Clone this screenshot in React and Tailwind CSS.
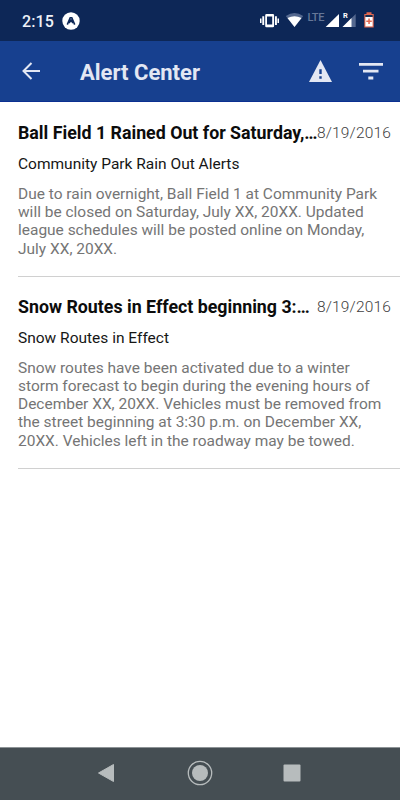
const alerts = [
  {
    title: 'Ball Field 1 Rained Out for Saturday,…',
    category: 'Community Park Rain Out Alerts',
    body: 'Due to rain overnight, Ball Field 1 at Community Park\nwill be closed on Saturday, July XX, 20XX. Updated\nleague schedules will be posted online on Monday,\nJuly XX, 20XX.',
  },
  {
    title: 'Snow Routes in Effect beginning 3:…',
    category: 'Snow Routes in Effect',
    body: 'Snow routes have been activated due to a winter\nstorm forecast to begin during the evening hours of\nDecember XX, 20XX. Vehicles must be removed from\nthe street beginning at 3:30 p.m. on December XX,\n20XX. Vehicles left in the roadway may be towed.',
  },
];

function StatusBar() {
  return (
    <div className="flex h-[41px] shrink-0 items-center bg-[#0d2757] pl-[22px]">
      <span className="w-[40px] pt-[2px] text-[16px] leading-5 font-medium tracking-[0.1px] text-[#eef1f8]">2:15</span>
      <svg width="18" height="18" viewBox="0 0 18 18">
        <circle cx="9" cy="9" r="8.7" fill="#fff" />
        <path d="M5.3 12.6 8.2 5.8h1.6l2.9 6.8M7 11 9 8.2 11 11" fill="none" stroke="#0d2757" strokeWidth="1.6" />
      </svg>
      <svg width="150" height="41" viewBox="0 0 150 41" className="ml-auto">
        <g fill="#fff">
          <path d="M10 18.5h1.5v4.5H10zM12.3 16.3h1.9v8.8h-1.9zM25 16.3h1.9v8.8H25zM27.5 18.5H29v4.5h-1.5z" />
          <path fillRule="evenodd" d="M16.5 14h6.3a1.3 1.3 0 0 1 1.3 1.3v10.6a1.3 1.3 0 0 1-1.3 1.3h-6.3a1.3 1.3 0 0 1-1.3-1.3V15.3a1.3 1.3 0 0 1 1.3-1.3zM17 16.5v8h5.2v-8z" />
        </g>
        <path d="M44.5 27 35.8 16Q44.5 10 53.2 16z" fill="#54688f" />
        <path d="M44.5 27 37.5 18Q44.5 14.3 51.5 18z" fill="#fff" />
        <text x="57.5" y="21" fontSize="11" fontWeight="500" fill="#667798" fontFamily="Roboto, sans-serif" textLength="17">LTE</text>
        <path d="M75.7 27 89 14v13z" fill="#fff" />
        <path d="M92.5 27 105.7 14v13z" fill="#54688f" />
        <path d="M92.5 27 101.5 18v9z" fill="#fff" />
        <text x="93" y="18.4" fontSize="7.5" fontWeight="700" fill="#fff" fontFamily="Roboto, sans-serif">R</text>
        <path d="M116.5 12.2h5v1.8h2.2v13.5h-9.4V14h2.2z" fill="#e2674f" />
        <path d="M115.4 15h7.2v2h-7.2z" fill="#163055" />
        <path d="M115.4 17h7.2v9.4h-7.2z" fill="#fff" />
        <path d="M118.3 18.5h1.5v2h2v1.5h-2v2h-1.5v-2h-2v-1.5h2z" fill="#e2674f" />
      </svg>
    </div>
  );
}

function AppBar() {
  return (
    <header className="flex h-[61px] shrink-0 items-center border-b border-[#0b2f91] bg-[#17408f] text-[#e3e7f3]">
      <svg width="18" height="18" viewBox="0 0 18 18" className="ml-[22px]">
        <path d="M18 9H1.5M9.5 1 1.5 9l8 8" fill="none" stroke="currentColor" strokeWidth="2" />
      </svg>
      <h1 className="ml-[40px] pt-[3px] text-[22px] leading-7 font-bold">Alert Center</h1>
      <svg width="24" height="22" viewBox="0 0 24 22" className="ml-auto">
        <path d="M12.5 0 24 22H1z" fill="currentColor" />
        <path d="M11.3 9.2h2.4v4.8h-2.4zM11.3 16.3h2.4v2.4h-2.4z" fill="#17408f" />
      </svg>
      <svg width="24" height="17" viewBox="0 0 24 17" className="mr-[17px] ml-[27px]">
        <path d="M0 0h24v2.8H0zM4 6.8h15.5v2.8H4zM9.3 13.6h5v2.8h-5z" fill="currentColor" />
      </svg>
    </header>
  );
}

function Alert({ title, category, body }) {
  return (
    <article className="ml-[18px] border-b border-[#d0d0d0] pt-[18px] pb-[18px] first:pt-[19px]">
      <div className="flex h-6 items-center justify-between pr-[9px] whitespace-nowrap">
        <h2 className="text-[17.8px] leading-6 font-bold text-[#0c0c0c]">{title}</h2>
        <time className="-ml-2 text-[15.5px] leading-6 font-light tracking-[0.18px] text-[#404040]">8/19/2016</time>
      </div>
      <p className="mt-[9px] text-[15.5px] leading-5 text-[#161616]">{category}</p>
      <p className="mt-[11px] text-[15.48px] leading-[18.2px] whitespace-pre text-[#757575]">{body}</p>
    </article>
  );
}

export default function App() {
  return (
    <div className="flex h-[800px] w-[400px] flex-col overflow-hidden bg-white font-['Roboto',sans-serif]">
      <StatusBar />
      <AppBar />
      <main className="flex-1">
        {alerts.map((alert) => (
          <Alert key={alert.title} {...alert} />
        ))}
      </main>
      <nav className="flex h-[53px] shrink-0 items-center justify-between border-t border-[#8d9396] bg-[#454e53] pr-[99px] pb-[2px] pl-[97px] text-[#b7bcbd]">
        <svg width="18" height="20" viewBox="0 0 18 20">
          <path d="M1.5 10 16.5 1.5v17z" fill="currentColor" stroke="currentColor" strokeLinejoin="round" />
        </svg>
        <svg width="26" height="26" viewBox="0 0 26 26" className="ml-0.5">
          <circle cx="13" cy="13" r="11.7" fill="none" stroke="currentColor" strokeWidth="1.3" />
          <circle cx="13" cy="13" r="8" fill="currentColor" />
        </svg>
        <svg width="18" height="18" viewBox="0 0 18 18">
          <rect x="0.5" y="0.5" width="17" height="17" rx="1" fill="currentColor" />
        </svg>
      </nav>
    </div>
  );
}
